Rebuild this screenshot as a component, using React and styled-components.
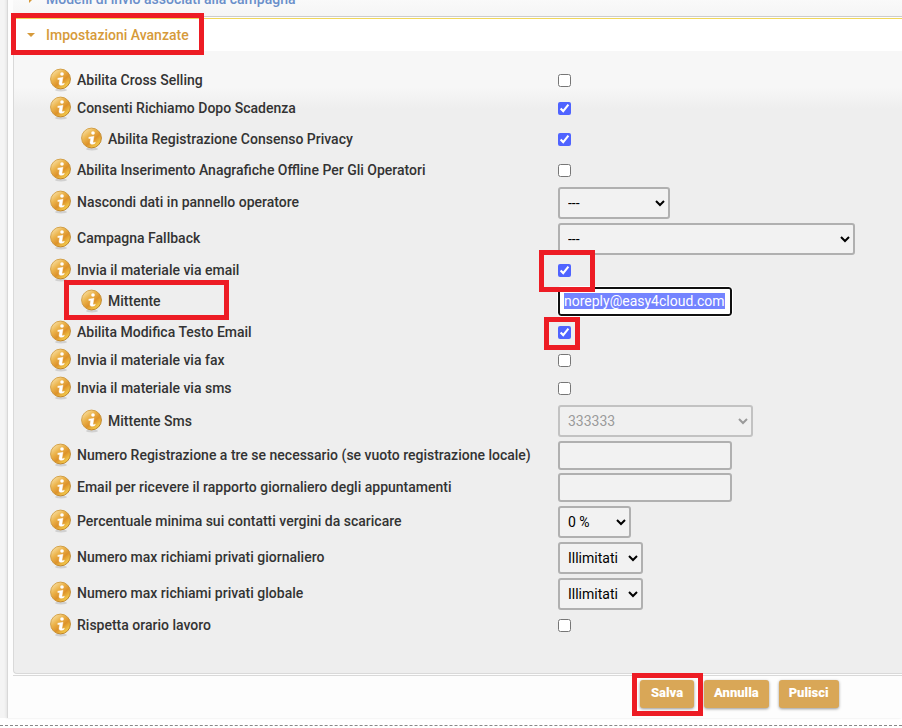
import React, { useEffect, useRef } from 'react';
import styled, { createGlobalStyle, css } from 'styled-components';

const GlobalStyle = createGlobalStyle`
  * { box-sizing: border-box; }
  body {
    margin: 0; background: #fff; color: #333; overflow: hidden;
    font-family: Roboto, "Liberation Sans", sans-serif; font-size: 14px;
  }
`;

const Page = styled.div`
  padding-left: 7px; background: #f4f4f4; border-bottom: 1px solid #fff;
`;

const Sheet = styled.main`
  padding-left: 5px; background: #fdfdfd; border-left: 1px solid #d8d8d8;
  box-shadow: -1px 0 2px #e4e4e4;
`;

const Highlight = styled.span`
  position: absolute; z-index: 2; pointer-events: none; border: 5px solid #ed1c24;
  inset: ${({ $inset }) => $inset};
  ${({ $width }) => $width && css`width: ${$width}px;`}
`;

const Section = styled.h3`
  position: relative; display: flex; align-items: center; gap: 9px; margin: 0;
  height: 33px; padding-left: 12px; background: #fff; border-top: 1px solid #f0d75a;
  font-size: 14px; font-weight: 500; line-height: 20px;
`;

const ClosedSection = styled(Section)`
  height: 36px; margin-top: -19px; margin-bottom: 1px;
  background: linear-gradient(#fff, #f5f5f5); border-top: 0; border-bottom: 1px solid #ccc;
`;

const SectionLink = styled.a`
  color: ${({ $open }) => ($open ? '#d69a3a' : '#6a8fca')}; text-decoration: none;
`;

const Arrow = styled.svg`
  width: 12px; height: 12px; fill: #d69a3a;
`;

const Form = styled.form` margin: 0; `;

const Panel = styled.div`
  padding: 15px 0 34px 36px; border: 1px solid #d9d9d9; border-width: 0 0 1px 1px;
  border-bottom-left-radius: 4px;
  background: #eee linear-gradient(#f7f7f7, #f7f7f7 36px, #eee 58px);
`;

const Row = styled.div`
  display: grid; grid-template-columns: 508px minmax(0, 1fr); align-items: center;
  height: ${({ $height }) => $height}px;
`;

const Caption = styled.div`
  position: relative; display: flex; align-items: center; gap: 5px; height: 100%;
  padding-left: ${({ $sub }) => ($sub ? 31 : 0)}px;
`;

const Label = styled.label`
  font-size: 14px; font-weight: 500; line-height: 20px; white-space: nowrap;
`;

const Field = styled.div`
  position: relative; display: flex; align-items: center;
  padding-top: ${({ $boxed }) => ($boxed ? 2 : 0)}px;
`;

const Checkbox = styled.input`
  width: 13px; height: 13px; margin: 0; accent-color: #4f63ff;
`;

const control = css`
  border: 2px solid #b0b0b0; border-radius: 3px; background-color: #f2f2f2;
  font-family: inherit; font-size: 14px; color: #000;
`;

const Select = styled.select`
  ${control}
  width: ${({ $width }) => $width}px; height: 32px; padding: 0 0 0 4px;
  &:disabled { opacity: 0.7; color: #777; }
`;

const TextInput = styled.input`
  ${control}
  width: 174px; height: 29px; padding: 0 4px;
  &:focus { background: #fff; border-color: #101010; outline: 1px solid #fff; }
  &::selection { background: #7484ff; color: #fff; }
`;

const Footer = styled.div`
  display: flex; gap: 10px; margin-top: 1px; padding: 4px 0 10px 627px;
  border-top: 1px solid #d9d9d9;
`;

const ButtonSlot = styled.div` position: relative; `;

const Button = styled.button`
  min-width: 54px; height: 28px; padding: 0 10px 3px; border: 0; border-radius: 3px;
  background: #d9a757; color: #fff; box-shadow: 0 1px 3px rgba(0, 0, 0, 0.4);
  font-family: inherit; font-size: 13px; font-weight: 900;
`;

const Divider = styled.hr`
  margin: 6px 0 0; border: 0; border-top: 1px dashed #888;
`;

const InfoIcon = () => (
  <svg width="22" height="24" viewBox="0 0 22 24" aria-hidden="true">
    <defs>
      <linearGradient id="coin" x1="0" y1="0" x2="0.8" y2="1">
        <stop offset="0" stopColor="#fdf0c4" />
        <stop offset="0.4" stopColor="#ecb44c" />
        <stop offset="0.65" stopColor="#dd922a" />
        <stop offset="1" stopColor="#fadb55" />
      </linearGradient>
      <linearGradient id="rim" x1="0" y1="0" x2="1" y2="1">
        <stop offset="0" stopColor="#dcae58" />
        <stop offset="1" stopColor="#b87a1c" />
      </linearGradient>
    </defs>
    <ellipse cx="11" cy="22" rx="6" ry="1.5" fill="#999" opacity="0.35" />
    <circle cx="10.5" cy="11" r="9.9" fill="url(#coin)" stroke="url(#rim)" />
    <circle cx="12" cy="6" r="1.8" fill="#fff" />
    <path d="M7.8 10.2 13 9.2l-1 5.8q0 1.2 2.4.2l-.4 1.2q-5 2.2-5-.8l.7-4.2-1.9.2z" fill="#fff" stroke="#fff" strokeWidth="0.4" />
  </svg>
);

const fields = [
  { id: 'cross', label: 'Abilita Cross Selling', type: 'check' },
  { id: 'richiamo', label: 'Consenti Richiamo Dopo Scadenza', type: 'check', checked: true },
  { id: 'privacy', label: 'Abilita Registrazione Consenso Privacy', type: 'check', checked: true, sub: true },
  { id: 'offline', label: 'Abilita Inserimento Anagrafiche Offline Per Gli Operatori', type: 'check' },
  { id: 'nascondi', label: 'Nascondi dati in pannello operatore', type: 'select', value: '---', width: 112 },
  { id: 'fallback', label: 'Campagna Fallback', type: 'select', value: '---', width: 297 },
  { id: 'email', label: 'Invia il materiale via email', type: 'check', checked: true, mark: { inset: '-14px auto -15px -19px', width: 56 } },
  { id: 'mittente', label: 'Mittente', type: 'text', value: 'noreply@easy4cloud.com', sub: true, active: true },
  { id: 'testo', label: 'Abilita Modifica Testo Email', type: 'check', checked: true, mark: { inset: '-9px auto -11px -14px', width: 36 } },
  { id: 'fax', label: 'Invia il materiale via fax', type: 'check' },
  { id: 'sms', label: 'Invia il materiale via sms', type: 'check' },
  { id: 'mittenteSms', label: 'Mittente Sms', type: 'select', value: '333333', width: 195, sub: true, disabled: true },
  { id: 'registrazione', label: 'Numero Registrazione a tre se necessario (se vuoto registrazione locale)', type: 'text' },
  { id: 'rapporto', label: 'Email per ricevere il rapporto giornaliero degli appuntamenti', type: 'text' },
  { id: 'percentuale', label: 'Percentuale minima sui contatti vergini da scaricare', type: 'select', value: '0 %', width: 73 },
  { id: 'giornaliero', label: 'Numero max richiami privati giornaliero', type: 'select', value: 'Illimitati', width: 85 },
  { id: 'globale', label: 'Numero max richiami privati globale', type: 'select', value: 'Illimitati', width: 85 },
  { id: 'orario', label: 'Rispetta orario lavoro', type: 'check' },
];

const rowHeight = ({ type, sub }) => {
  if (type === 'select') return sub ? 37 : 36;
  if (sub) return 34;
  return type === 'text' ? 32 : 28;
};

const Control = ({ field, inputRef }) => {
  if (field.type === 'check') {
    return <Checkbox type="checkbox" id={field.id} defaultChecked={field.checked} />;
  }
  if (field.type === 'select') {
    return (
      <Select id={field.id} $width={field.width} disabled={field.disabled}>
        <option>{field.value}</option>
      </Select>
    );
  }
  return <TextInput type="text" id={field.id} defaultValue={field.value} ref={inputRef} />;
};

const App = () => {
  const senderRef = useRef(null);

  useEffect(() => {
    senderRef.current.focus();
    senderRef.current.select();
  }, []);

  return (
    <>
      <GlobalStyle />
      <Page>
        <Sheet>
          <ClosedSection>
            <Arrow viewBox="0 0 12 12"><path d="M4 2l4 4-4 4z" /></Arrow>
            <SectionLink href="#modelli">Modelli di invio associati alla campagna</SectionLink>
          </ClosedSection>
          <Section>
            <Arrow viewBox="0 0 12 12"><path d="M2 4h8l-4 4z" /></Arrow>
            <SectionLink href="#avanzate" $open>Impostazioni Avanzate</SectionLink>
            <Highlight $inset="-6px auto -4px -2px" $width={193} />
          </Section>
          <Form onSubmit={e => e.preventDefault()}>
            <Panel>
              {fields.map(field => (
                <Row key={field.id} $height={rowHeight(field)}>
                  <Caption $sub={field.sub}>
                    <InfoIcon />
                    <Label htmlFor={field.id}>{field.label}</Label>
                    {field.active && <Highlight $inset="-4px auto -2px 14px" $width={165} />}
                  </Caption>
                  <Field $boxed={field.type === 'select' && !field.sub}>
                    <Control field={field} inputRef={field.active ? senderRef : undefined} />
                    {field.mark && <Highlight $inset={field.mark.inset} $width={field.mark.width} />}
                  </Field>
                </Row>
              ))}
            </Panel>
            <Footer>
              <ButtonSlot>
                <Button type="submit">Salva</Button>
                <Highlight $inset="-7px -9px -8px -8px" />
              </ButtonSlot>
              <Button type="button">Annulla</Button>
              <Button type="reset">Pulisci</Button>
            </Footer>
          </Form>
        </Sheet>
      </Page>
      <Divider />
    </>
  );
};

export default App;
